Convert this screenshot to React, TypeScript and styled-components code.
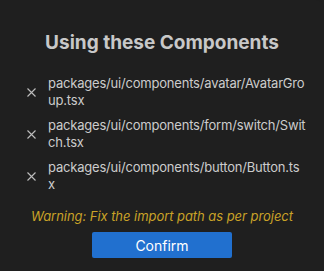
import React from "react";
import styled, { createGlobalStyle } from "styled-components";

const GlobalStyle = createGlobalStyle`
  html, body {
    margin: 0;
    padding: 0;
    background: #1f1f1f;
  }
  body {
    font-family: Inter, "Noto Sans", "Liberation Sans", sans-serif;
    -webkit-font-smoothing: antialiased;
  }
`;

const StyledDialog = styled.div`
  width: 324px;
  height: 271px;
  box-sizing: border-box;
  background: #1f1f1f;
  border-top-right-radius: 8px;
  padding: 31px 18px 0 27px;
  display: flex;
  flex-direction: column;
`;

const StyledTitle = styled.h1`
  margin: 0 0 20px -9px;
  font-size: 19px;
  line-height: 24px;
  font-weight: 700;
  color: #c8c8c8;
  text-align: center;
`;

const StyledList = styled.ul`
  list-style: none;
  margin: 0;
  padding: 0;
  display: flex;
  flex-direction: column;
  gap: 8px;
`;

const StyledItem = styled.li`
  display: flex;
  align-items: center;
  gap: 12px;
`;

const StyledIcon = styled.svg`
  flex: 0 0 auto;
  width: 9px;
  height: 9px;
  color: #bdbdbd;
`;

const StyledPath = styled.span`
  font-size: 13px;
  line-height: 17px;
  letter-spacing: -0.2px;
  color: #cccccc;
  word-break: break-all;
  width: 258px;
`;

const StyledWarning = styled.p`
  margin: 15px 0 0 -9px;
  font-size: 13px;
  line-height: 17px;
  letter-spacing: -0.05px;
  font-style: italic;
  color: #c9a227;
  text-align: center;
`;

const StyledButton = styled.button`
  align-self: center;
  margin: 7px 0 0 -9px;
  width: 140px;
  height: 26px;
  border: 0;
  border-radius: 2px;
  background: #2170cf;
  color: #ffffff;
  font-family: inherit;
  font-size: 14px;
  cursor: pointer;
`;

const components = [
  "packages/ui/components/avatar/AvatarGroup.tsx",
  "packages/ui/components/form/switch/Switch.tsx",
  "packages/ui/components/button/Button.tsx",
];

const CloseIcon = () => (
  <StyledIcon viewBox="0 0 9 9">
    <path
      d="M0.5 0.5 L8.5 8.5 M8.5 0.5 L0.5 8.5"
      stroke="currentColor"
      strokeWidth="1.1"
      fill="none"
    />
  </StyledIcon>
);

const App = () => {
  return (
    <>
      <GlobalStyle />
      <StyledDialog>
        <StyledTitle>Using these Components</StyledTitle>
        <StyledList>
          {components.map((path) => (
            <StyledItem key={path}>
              <CloseIcon />
              <StyledPath>{path}</StyledPath>
            </StyledItem>
          ))}
        </StyledList>
        <StyledWarning>Warning: Fix the import path as per project</StyledWarning>
        <StyledButton>Confirm</StyledButton>
      </StyledDialog>
    </>
  );
};

export default App;
